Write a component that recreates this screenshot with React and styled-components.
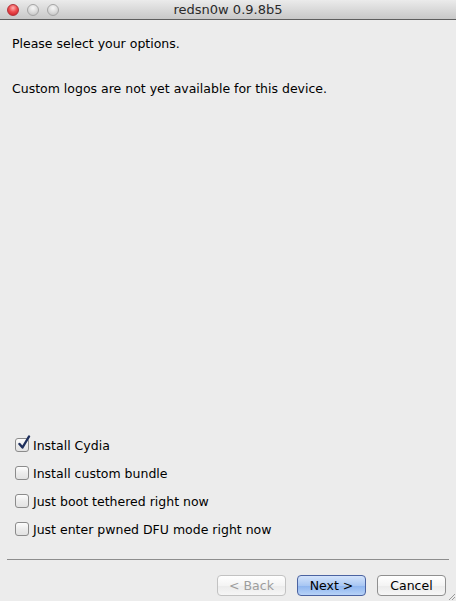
import React from "react";
import styled, { createGlobalStyle } from "styled-components";

const Global = createGlobalStyle`
  html, body {
    margin: 0;
    padding: 0;
    background: #ececec;
  }
  body {
    font-family: "Lucida Grande", "DejaVu Sans", sans-serif;
    font-size: 13px;
    color: #000;
  }
`;

const Window = styled.div`
  width: 456px;
  height: 601px;
  display: flex;
  flex-direction: column;
  background: #ececec;
  overflow: hidden;
  position: relative;
`;

const TitleBar = styled.div`
  height: 19px;
  flex: none;
  display: flex;
  align-items: center;
  position: relative;
  background: linear-gradient(#ebebeb, #d6d6d6 60%, #c8c8c8);
  border-bottom: 1px solid #5e5e5e;
`;

const Lights = styled.div`
  display: flex;
  gap: 8px;
  padding-left: 7px;
  position: relative;
  z-index: 1;
`;

const Light = styled.span`
  width: 12px;
  height: 12px;
  border-radius: 50%;
  box-sizing: border-box;
  border: 1px solid ${(p) => (p.$red ? "#b1333a" : "#a5a5a5")};
  background: ${(p) =>
    p.$red
      ? "radial-gradient(circle at 50% 30%, #ffb3b3 0%, #ee4d4f 45%, #c6161f 100%)"
      : "radial-gradient(circle at 50% 30%, #f7f7f7 0%, #dcdcdc 50%, #bcbcbc 100%)"};
`;

const Title = styled.div`
  position: absolute;
  left: 0;
  right: 0;
  text-align: center;
  font-size: 13px;
  color: #2a2a2a;
  line-height: 19px;
`;

const Body = styled.div`
  flex: 1;
  display: flex;
  flex-direction: column;
  padding: 0 12px;
`;

const Text = styled.p`
  margin: 0;
  font-size: 12.5px;
  line-height: 16px;
  margin-top: ${(p) => p.$top}px;
`;

const Spacer = styled.div`
  flex: 1;
`;

const Options = styled.div`
  display: flex;
  flex-direction: column;
  gap: 12px;
  padding-left: 3px;
  margin-bottom: 22px;
`;

const Option = styled.label`
  display: flex;
  align-items: center;
  height: 16px;
  font-size: 12.5px;
  gap: 4px;
`;

const Box = styled.span`
  width: 14px;
  height: 14px;
  box-sizing: border-box;
  border: 1px solid #8b8b8b;
  border-radius: 3px;
  background: linear-gradient(#fdfdfd, #ececec 50%, #e2e2e2);
  position: relative;
  flex: none;
`;

const Check = styled.svg`
  position: absolute;
  left: 1px;
  top: -4px;
`;

const Separator = styled.div`
  margin: 0 -5px;
  height: 1px;
  background: #8d8d8d;
`;

const Buttons = styled.div`
  display: flex;
  justify-content: flex-end;
  gap: 11px;
  padding: 15px 10px 5px 0;
`;

const Button = styled.div`
  width: 69px;
  height: 21px;
  box-sizing: border-box;
  border-radius: 4px;
  border: 1px solid ${(p) => (p.$primary ? "#4b63a1" : p.$disabled ? "#c2c2c2" : "#8f8f8f")};
  background: ${(p) =>
    p.$primary
      ? "linear-gradient(#d3e3fb, #a9c7f3 50%, #8db4ef 51%, #b7d2f7)"
      : "linear-gradient(#ffffff, #f4f4f4 50%, #ebebeb 51%, #f6f6f6)"};
  color: ${(p) => (p.$disabled ? "#9d9d9d" : "#000")};
  font-size: 12.5px;
  display: flex;
  align-items: center;
  justify-content: center;
`;

const Grip = styled.svg`
  position: absolute;
  right: 0;
  bottom: 0;
`;

const options = [
  { label: "Install Cydia", checked: true },
  { label: "Install custom bundle" },
  { label: "Just boot tethered right now" },
  { label: "Just enter pwned DFU mode right now" },
];

export default function App() {
  return (
    <Window>
      <Global />
      <TitleBar>
        <Lights>
          <Light $red />
          <Light />
          <Light />
        </Lights>
        <Title>redsn0w 0.9.8b5</Title>
      </TitleBar>
      <Body>
        <Text $top={16}>Please select your options.</Text>
        <Text $top={29}>Custom logos are not yet available for this device.</Text>
        <Spacer />
        <Options>
          {options.map((o) => (
            <Option key={o.label}>
              <Box>
                {o.checked && (
                  <Check width="14" height="16" viewBox="0 0 14 16">
                    <path d="M2.5 9 L5.5 12.5 L12 1.5" fill="none" stroke="#1e2f5c" strokeWidth="2.4" strokeLinecap="round" strokeLinejoin="round" />
                  </Check>
                )}
              </Box>
              {o.label}
            </Option>
          ))}
        </Options>
        <Separator />
      </Body>
      <Buttons>
        <Button $disabled>&lt; Back</Button>
        <Button $primary>Next &gt;</Button>
        <Button>Cancel</Button>
      </Buttons>
      <Grip width="10" height="10" viewBox="0 0 10 10">
        <path d="M9 3 L3 9 M9 6 L6 9" stroke="#9a9a9a" strokeWidth="1" />
      </Grip>
    </Window>
  );
}
